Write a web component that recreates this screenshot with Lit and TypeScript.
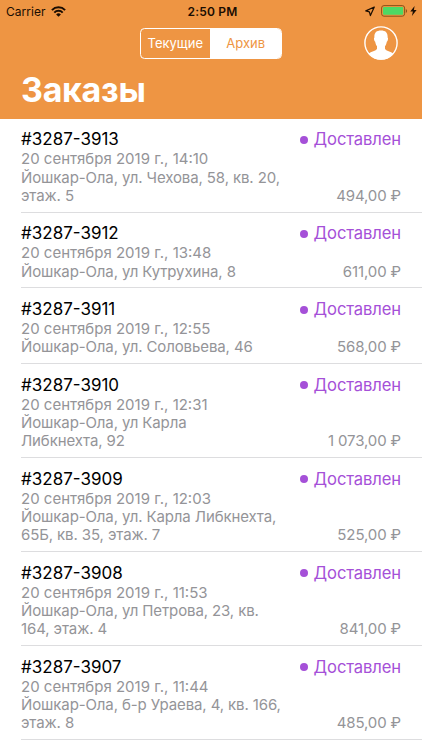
import { LitElement, html, css } from "lit";
import { customElement, property } from "lit/decorators.js";

interface Order {
  id: string;
  time: string;
  address: string[];
  total: string;
}

const ORDERS: Order[] = [
  { id: "3287-3913", time: "14:10", address: ["Йошкар-Ола, ул. Чехова, 58, кв. 20,", "этаж. 5"], total: "494,00" },
  { id: "3287-3912", time: "13:48", address: ["Йошкар-Ола, ул Кутрухина, 8"], total: "611,00" },
  { id: "3287-3911", time: "12:55", address: ["Йошкар-Ола, ул. Соловьева, 46"], total: "568,00" },
  { id: "3287-3910", time: "12:31", address: ["Йошкар-Ола, ул Карла", "Либкнехта, 92"], total: "1 073,00" },
  { id: "3287-3909", time: "12:03", address: ["Йошкар-Ола, ул. Карла Либкнехта,", "65Б, кв. 35, этаж. 7"], total: "525,00" },
  { id: "3287-3908", time: "11:53", address: ["Йошкар-Ола, ул Петрова, 23, кв.", "164, этаж. 4"], total: "841,00" },
  { id: "3287-3907", time: "11:44", address: ["Йошкар-Ола, б-р Ураева, 4, кв. 166,", "этаж. 8"], total: "485,00" },
];

@customElement("status-bar")
class StatusBar extends LitElement {
  static styles = css`
    :host { display: grid; grid-template-columns: 1fr auto 1fr; align-items: center; height: 22px; padding: 0 5px 0 6px; color: #1a0d02; font-size: 12px; }
    .left, .right { display: flex; align-items: center; }
    .left { gap: 5px; }
    .carrier { letter-spacing: 0.05px; }
    .time { padding-left: 2px; font-weight: 600; font-size: 12px; letter-spacing: 0.2px; }
    .right { justify-content: flex-end; }
    .arrow { margin-right: 6px; }
    .bolt { margin-left: 2px; }
    svg { display: block; }
  `;
  render() {
    return html`
      <div class="left">
        <span class="carrier">Carrier</span>
        <svg width="15" height="11" viewBox="0 0 15 11" fill="none" stroke="currentColor" stroke-width="2">
          <path d="M0.9 4.1a9.3 9.3 0 0 1 13.2 0" />
          <path d="M3.3 6.6a5.9 5.9 0 0 1 8.4 0" />
          <path d="M5.1 8.4a3.4 3.4 0 0 1 4.8 0L7.5 10.8z" fill="currentColor" stroke="none" />
        </svg>
      </div>
      <span class="time">2:50 PM</span>
      <div class="right">
        <svg class="arrow" width="10" height="11" viewBox="0 0 10 11" fill="none" stroke="currentColor" stroke-width="1.2" stroke-linejoin="round">
          <path d="M9.3 1L0.8 4.9L4.4 5.8L5.4 9.6z" />
        </svg>
        <svg width="27" height="12" viewBox="0 0 27 12">
          <rect x="0.6" y="0.6" width="23" height="10.6" rx="2.4" fill="none" stroke="#8a5219" stroke-width="1" />
          <rect x="2" y="2" width="20.2" height="7.8" rx="1" fill="#4cd964" />
          <path d="M24.8 4v4a2.2 2.2 0 0 0 0-4z" fill="#8a5219" />
        </svg>
        <svg class="bolt" width="7" height="10" viewBox="0 0 7 10"><path d="M4.6 0L0.3 5.6h2.6L1.9 10L6.6 4.1H3.9z" fill="currentColor" /></svg>
      </div>
    `;
  }
}

@customElement("order-row")
class OrderRow extends LitElement {
  @property({ attribute: false }) order!: Order;
  static styles = css`
    :host { display: flex; justify-content: space-between; box-sizing: border-box; margin-left: 21px; padding: 10.9px 21px 6.2px 0; border-bottom: 1px solid #dddddf; color: #949498; }
    .info, .side { display: flex; flex-direction: column; white-space: nowrap; }
    .side { align-items: flex-end; justify-content: space-between; }
    .id, .status { font-size: 17px; line-height: 21px; }
    .id { color: #000; }
    .line, .total { font-size: 15px; line-height: 18.3px; }
    .address { letter-spacing: -0.11px; }
    .total { letter-spacing: -0.12px; }
    .status { display: flex; align-items: center; gap: 6px; color: #a550d8; font-size: 16.6px; letter-spacing: -0.12px; }
    .dot { width: 8px; height: 8px; border-radius: 50%; background: currentColor; }
  `;
  render() {
    const o = this.order;
    return html`
      <div class="info">
        <span class="id">#${o.id}</span>
        <span class="line">20 сентября 2019 г., ${o.time}</span>
        ${o.address.map((l) => html`<span class="line address">${l}</span>`)}
      </div>
      <div class="side">
        <span class="status"><i class="dot"></i><span>Доставлен</span></span>
        <span class="total">${o.total} ₽</span>
      </div>
    `;
  }
}

@customElement("app-root")
class AppRoot extends LitElement {
  static styles = css`
    :host { display: block; width: 422px; height: 750px; overflow: hidden; background: #fff; font-family: Inter, "Noto Sans", sans-serif; }
    .header { height: 118.6px; background: #ee9543; color: #fff; }
    .nav { display: grid; grid-template-columns: 1fr 142px 1fr; align-items: center; height: 42px; padding: 0 24px 0 23px; }
    .tabs { display: flex; grid-column: 2; box-sizing: border-box; height: 31px; border: 1px solid #fff; border-radius: 4.5px; overflow: hidden; font-size: 13px; }
    .tab { flex: 1; display: flex; align-items: center; justify-content: center; }
    .tab.active { padding-left: 1px; background: #fff; color: #ee9543; }
    .avatar { justify-self: end; display: block; }
    .title { margin: 0; padding-left: 21px; font-size: 34px; line-height: 52px; font-weight: 700; letter-spacing: -0.3px; }
  `;
  render() {
    return html`
      <header class="header">
        <status-bar></status-bar>
        <div class="nav">
          <div class="tabs"><span class="tab">Текущие</span><span class="tab active">Архив</span></div>
          <svg class="avatar" width="34" height="34" viewBox="0 0 34 34">
            <circle cx="17" cy="17" r="16.1" fill="none" stroke="#fff" stroke-width="1.4" />
            <path d="M17 4.400c4.800 0 6.900 2.300 6.600 7.100c.8.4.4 3.500-.8 4.200c-.4 2-1 3.500-1.800 4.500v2.600c.8 2.500 6.200 2.600 8.400 5A16 16 0 0 1 4.600 27.800c2.200-2.400 7.600-2.500 8.400-5v-2.600c-.8-1-1.400-2.500-1.800-4.500c-1.200-.7-1.600-3.800-.8-4.200c-.3-4.800 1.800-7.100 6.600-7.100z" fill="#fff" />
          </svg>
        </div>
        <h1 class="title">Заказы</h1>
      </header>
      <main>${ORDERS.map((o) => html`<order-row .order=${o}></order-row>`)}</main>
    `;
  }
}
